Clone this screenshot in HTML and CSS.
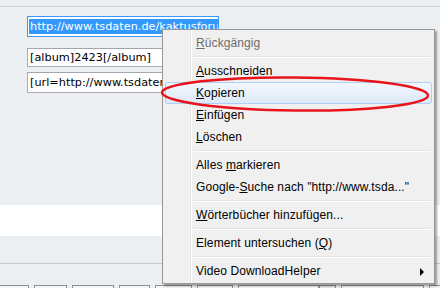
FILE: index.html
```html
<!DOCTYPE html>
<html lang="de">
<head>
    <meta charset="UTF-8">
    <title>Kontextmenü</title>
    <link rel="stylesheet" href="styles.css">
</head>
<body>
    <div class="page">
        <div class="rule"></div>
        <div class="fields">
            <div class="field focused"><span class="sel">http://www.tsdaten.de/kaktusforum/album.php?albumid=2423</span></div>
            <div class="field short">[album]2423[/album]</div>
            <div class="field">[url=http://www.tsdaten.de/kaktusforum/album.php?albumid=2423]</div>
        </div>
        <div class="band"></div>
        <div class="rule lower"></div>
        <div class="buttons">
            <span style="width:31px"></span>
            <span style="width:33px"></span>
            <span style="width:42px"></span>
            <span style="width:31px"></span>
            <span style="width:37px"></span>
            <span style="width:36px"></span>
            <span style="width:81px"></span>
            <span class="joined" style="width:17px"></span>
            <span style="width:83px"></span>
            <span style="width:30px"></span>
        </div>
    </div>

    <!-- Kontextmenü -->
    <ul class="menu">
        <li class="disabled"><u>R</u>ückgängig</li>
        <li class="sep"></li>
        <li><u>A</u>usschneiden</li>
        <li class="hover"><u>K</u>opieren</li>
        <li><u>E</u>infügen</li>
        <li><u>L</u>öschen</li>
        <li class="sep"></li>
        <li>Alles <u>m</u>arkieren</li>
        <li>Google-<u>S</u>uche nach "http://www.tsda..."</li>
        <li class="sep"></li>
        <li><u>W</u>örterbücher hinzufügen...</li>
        <li class="sep"></li>
        <li>Element untersuchen (<u>Q</u>)</li>
        <li class="sep"></li>
        <li class="sub">Video DownloadHelper</li>
    </ul>

    <svg class="circle" width="280" height="44" viewBox="0 0 280 44">
        <ellipse cx="136" cy="21" rx="133" ry="16.5" transform="rotate(0.6 136 21)" />
    </svg>
</body>
</html>
```

FILE: styles.css
```css
body {
    margin: 0;
    width: 440px;
    height: 288px;
    overflow: hidden;
    background-color: #eceff2;
    font-family: "DejaVu Sans", Verdana, sans-serif;
}
.page {
    padding-top: 6px;
}
.rule {
    border-top: 1px solid #cdd0d3;
}
.fields {
    display: flex;
    flex-direction: column;
    align-items: flex-start;
    padding: 9px 0 0 27px;
}
.field {
    box-sizing: border-box;
    width: 400px;
    height: 21px;
    padding: 0 2px;
    border: 1px solid #abadb3;
    border-top-color: #a3a6ad;
    background-color: #fff;
    font-size: 11.3px;
    line-height: 19px;
    color: #000;
    white-space: nowrap;
    overflow: hidden;
}
.field.focused {
    width: 192px;
    margin-bottom: 11px;
    padding-left: 1px;
    border-color: #3399ff;
}
.field.short {
    height: 19px;
    line-height: 17px;
    margin-bottom: 5px;
}
.sel {
    background-color: #3399ff;
    color: #fff;
    padding: 1px 1px;
}
.band {
    height: 31px;
    margin-top: 112px;
    background-color: #fff;
}
.rule.lower {
    margin-top: 27px;
    border-top-color: #c7c9cc;
}
.buttons {
    display: flex;
    gap: 5px;
    margin: 21px 0 0 -2px;
}
.buttons span {
    height: 10px;
    box-sizing: border-box;
    border: 1px solid #8e8f90;
    background-color: #f4f4f4;
    flex-shrink: 0;
}
.buttons span.joined {
    margin-left: -5px;
    background-color: #e4e4e4;
}

.menu {
    position: absolute;
    left: 162px;
    top: 29px;
    width: 273px;
    box-sizing: border-box;
    margin: 0;
    padding: 2px 2px 1px;
    list-style: none;
    border: 1px solid #979797;
    background: linear-gradient(to right, #f0f0f0 27px, #e2e3e3 27px, #e2e3e3 28px, #fff 28px, #fff 29px, #f0f0f0 29px);
    box-shadow: 2px 2px 2px rgba(0,0,0,0.35);
    font-family: "Liberation Sans", Arial, sans-serif;
    font-size: 12px;
    letter-spacing: 0.1px;
    color: #000;
}
.menu li {
    position: relative;
    box-sizing: border-box;
    height: 22px;
    line-height: 22px;
    padding-left: 31px;
    white-space: nowrap;
}
.menu li.disabled {
    color: #6d6d6d;
}
.menu li.hover {
    line-height: 20px;
    border: 1px solid #aecff7;
    border-radius: 3px;
    padding-left: 30px;
    background: linear-gradient(to bottom, #f2f7fe, #dde9f8);
}
.menu li.sep {
    height: 6px;
    padding: 0;
}
.menu li.sep::before {
    content: "";
    position: absolute;
    left: 28px;
    right: 1px;
    top: 2px;
    border-top: 1px solid #e2e3e3;
    border-bottom: 1px solid #fff;
}
.menu li.sub::after {
    content: "";
    position: absolute;
    right: 8px;
    top: 8px;
    border-left: 4px solid #000;
    border-top: 4px solid transparent;
    border-bottom: 4px solid transparent;
}

.circle {
    position: absolute;
    left: 159px;
    top: 73px;
}
.circle ellipse {
    fill: none;
    stroke: #e8141c;
    stroke-width: 2.5;
}
```
